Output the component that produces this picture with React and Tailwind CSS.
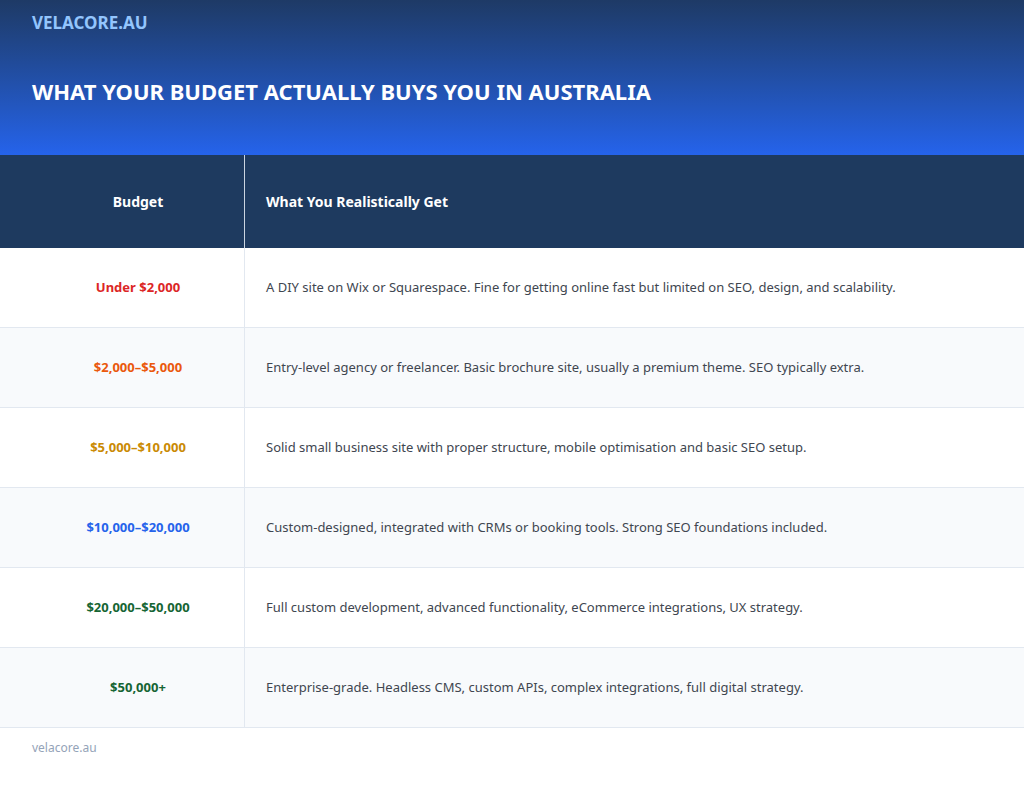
const ROWS = [
  ["Under $2,000", "text-[#dc2626]", "A DIY site on Wix or Squarespace. Fine for getting online fast but limited on SEO, design, and scalability."],
  ["$2,000–$5,000", "text-[#ea580c]", "Entry-level agency or freelancer. Basic brochure site, usually a premium theme. SEO typically extra."],
  ["$5,000–$10,000", "text-[#ca8a04]", "Solid small business site with proper structure, mobile optimisation and basic SEO setup."],
  ["$10,000–$20,000", "text-[#2563eb]", "Custom-designed, integrated with CRMs or booking tools. Strong SEO foundations included."],
  ["$20,000–$50,000", "text-[#166534]", "Full custom development, advanced functionality, eCommerce integrations, UX strategy."],
  ["$50,000+", "text-[#166534]", "Enterprise-grade. Headless CMS, custom APIs, complex integrations, full digital strategy."],
];

export default function App() {
  return (
    <div className="w-[1024px] h-[792px] bg-white font-[family-name:'Liberation_Sans',Arial,sans-serif]">
      <header className="h-[155px] bg-gradient-to-b from-[#1e3a66] to-[#2563eb] px-8 pt-[12px]">
        <div className="text-[#93c5fd] text-[17px] font-bold leading-[22px]">VELACORE.AU</div>
        <h1 className="mt-[44px] text-white text-[22px] font-bold leading-[26px]">
          WHAT YOUR BUDGET ACTUALLY BUYS YOU IN AUSTRALIA
        </h1>
      </header>
      <div className="flex h-[93px] bg-[#1e3a5f] text-white text-[14px] font-bold">
        <div className="w-[245px] pl-8 flex items-center justify-center border-r border-[#cbd5e1]">Budget</div>
        <div className="flex-1 flex items-center pl-[21px]">What You Realistically Get</div>
      </div>
      {ROWS.map(([b, c, d], i) => (
        <div key={b} className={`flex h-[80px] border-b border-[#e2e8f0] text-[13px] ${i % 2 ? "bg-[#f8fafc]" : "bg-white"}`}>
          <div className={`w-[245px] pl-8 flex items-center justify-center border-r border-[#e2e8f0] font-bold ${c}`}>{b}</div>
          <div className="flex-1 flex items-center pl-[21px] text-[#404650]">{d}</div>
        </div>
      ))}
      <div className="px-8 pt-[11px] text-[12px] text-[#94a3b8]">velacore.au</div>
    </div>
  );
}
